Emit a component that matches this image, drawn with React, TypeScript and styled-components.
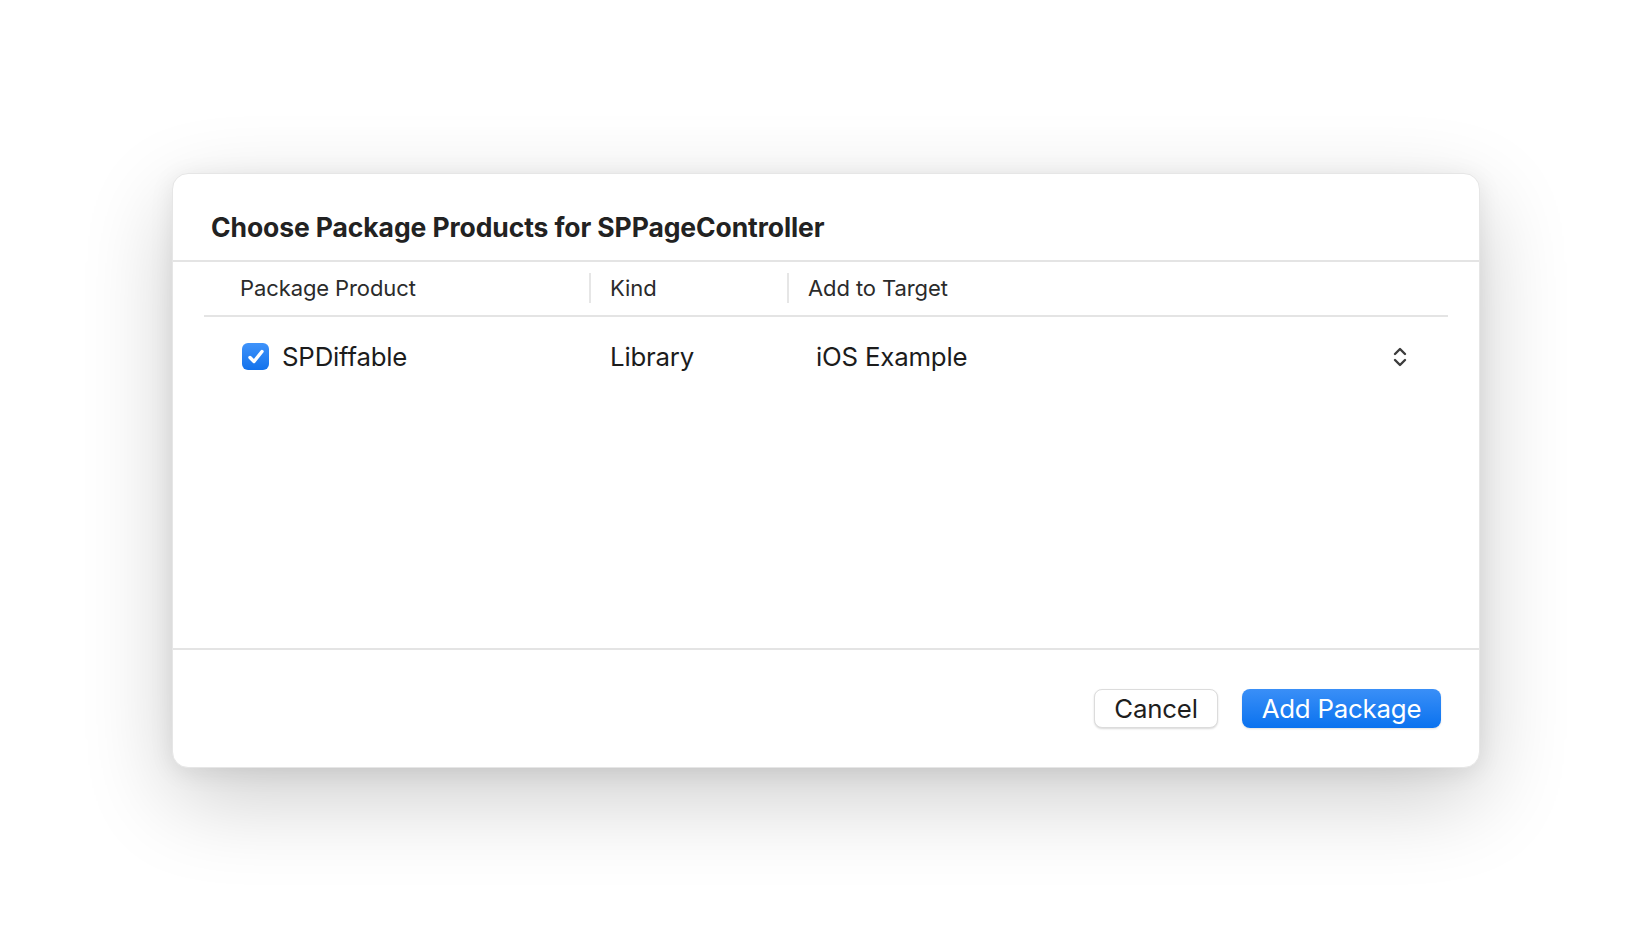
import React from "react";
import styled, { createGlobalStyle } from "styled-components";

const Global = createGlobalStyle`
  html, body { margin: 0; padding: 0; background: #ffffff; }
  body { font-family: Inter, "Noto Sans", sans-serif; -webkit-font-smoothing: antialiased; }
  * { box-sizing: border-box; }
`;

const Page = styled.div`
  width: 1652px;
  height: 940px;
  display: flex;
  align-items: center;
  justify-content: center;
  background: #ffffff;
`;

const Dialog = styled.div`
  width: 1308px;
  height: 595px;
  background: #ffffff;
  border-radius: 16px;
  border: 1px solid #e6e6e6;
  box-shadow: 0 30px 90px rgba(0, 0, 0, 0.2), 0 4px 24px rgba(0, 0, 0, 0.08);
  display: flex;
  flex-direction: column;
  overflow: hidden;
`;

const Header = styled.div`
  padding: 38px 38px 18px;
  border-bottom: 2px solid #e4e4e4;
`;

const Title = styled.h1`
  margin: 0;
  font-size: 26.5px;
  line-height: 30px;
  font-weight: 700;
  color: #222222;
  letter-spacing: -0.1px;
`;

const TableArea = styled.div`
  flex: 1;
  padding: 0 31px;
`;

const HeadRow = styled.div`
  display: grid;
  grid-template-columns: 385px 198px 1fr;
  height: 55px;
  align-items: center;
  border-bottom: 2px solid #e4e4e4;
`;

const HeadCell = styled.div<{ $divider?: boolean; $pad: number }>`
  display: flex;
  align-items: center;
  height: 30px;
  padding-left: ${(p) => p.$pad}px;
  border-left: ${(p) => (p.$divider ? "2px solid #e6e6e6" : "none")};
  font-size: 22px;
  color: #2b2b2b;
  letter-spacing: -0.1px;
`;

const DataRow = styled.div`
  display: grid;
  grid-template-columns: 385px 198px 1fr;
  height: 80px;
  align-items: center;
`;

const Cell = styled.div<{ $pad: number }>`
  display: flex;
  align-items: center;
  padding-left: ${(p) => p.$pad}px;
  font-size: 25.8px;
  color: #1c1c1c;
  letter-spacing: -0.2px;
`;

const Check = styled.span`
  width: 27px;
  height: 27px;
  border-radius: 6px;
  background: linear-gradient(#3f93fa, #1372ec);
  display: inline-flex;
  align-items: center;
  justify-content: center;
  margin-right: 13px;
`;

const Popup = styled.div`
  flex: 1;
  display: flex;
  align-items: center;
  justify-content: space-between;
  padding-left: 8px;
  padding-right: 40px;
`;

const Footer = styled.div`
  border-top: 2px solid #e4e4e4;
  height: 119px;
  display: flex;
  align-items: center;
  justify-content: flex-end;
  gap: 24px;
  padding: 0 38px 0 0;
`;

const Button = styled.button<{ $primary?: boolean }>`
  height: 39px;
  border-radius: 8px;
  font-family: Inter, "Noto Sans", sans-serif;
  font-size: 25.8px;
  letter-spacing: -0.2px;
  padding: 0 14px;
  cursor: pointer;
  border: ${(p) => (p.$primary ? "none" : "1px solid #dcdcdc")};
  color: ${(p) => (p.$primary ? "#ffffff" : "#1e1e1e")};
  background: ${(p) =>
    p.$primary ? "linear-gradient(#3a8ff7, #0a72ef)" : "#ffffff"};
  box-shadow: ${(p) =>
    p.$primary
      ? "0 1px 2px rgba(0,0,0,0.12)"
      : "0 1px 2px rgba(0,0,0,0.15)"};
  min-width: ${(p) => (p.$primary ? "199px" : "124px")};
`;

export default function App() {
  return (
    <>
      <Global />
      <Page>
        <Dialog>
          <Header>
            <Title>Choose Package Products for SPPageController</Title>
          </Header>
          <TableArea>
            <HeadRow>
              <HeadCell $pad={36}>Package Product</HeadCell>
              <HeadCell $divider $pad={19}>Kind</HeadCell>
              <HeadCell $divider $pad={19}>Add to Target</HeadCell>
            </HeadRow>
            <DataRow>
              <Cell $pad={38}>
                <Check>
                  <svg width="22" height="22" viewBox="0 0 22 22">
                    <path
                      d="M5 11.5 L9 15.5 L17 5.5"
                      fill="none"
                      stroke="#ffffff"
                      strokeWidth="3.4"
                      strokeLinecap="round"
                      strokeLinejoin="round"
                    />
                  </svg>
                </Check>
                SPDiffable
              </Cell>
              <Cell $pad={21}>Library</Cell>
              <Cell $pad={21}>
                <Popup>
                  <span>iOS Example</span>
                  <svg width="16" height="24" viewBox="0 0 16 24">
                    <path
                      d="M3 9 L8 4 L13 9 M3 15 L8 20 L13 15"
                      fill="none"
                      stroke="#3c3c3c"
                      strokeWidth="2.4"
                      strokeLinecap="round"
                      strokeLinejoin="round"
                    />
                  </svg>
                </Popup>
              </Cell>
            </DataRow>
          </TableArea>
          <Footer>
            <Button>Cancel</Button>
            <Button $primary>Add Package</Button>
          </Footer>
        </Dialog>
      </Page>
    </>
  );
}
